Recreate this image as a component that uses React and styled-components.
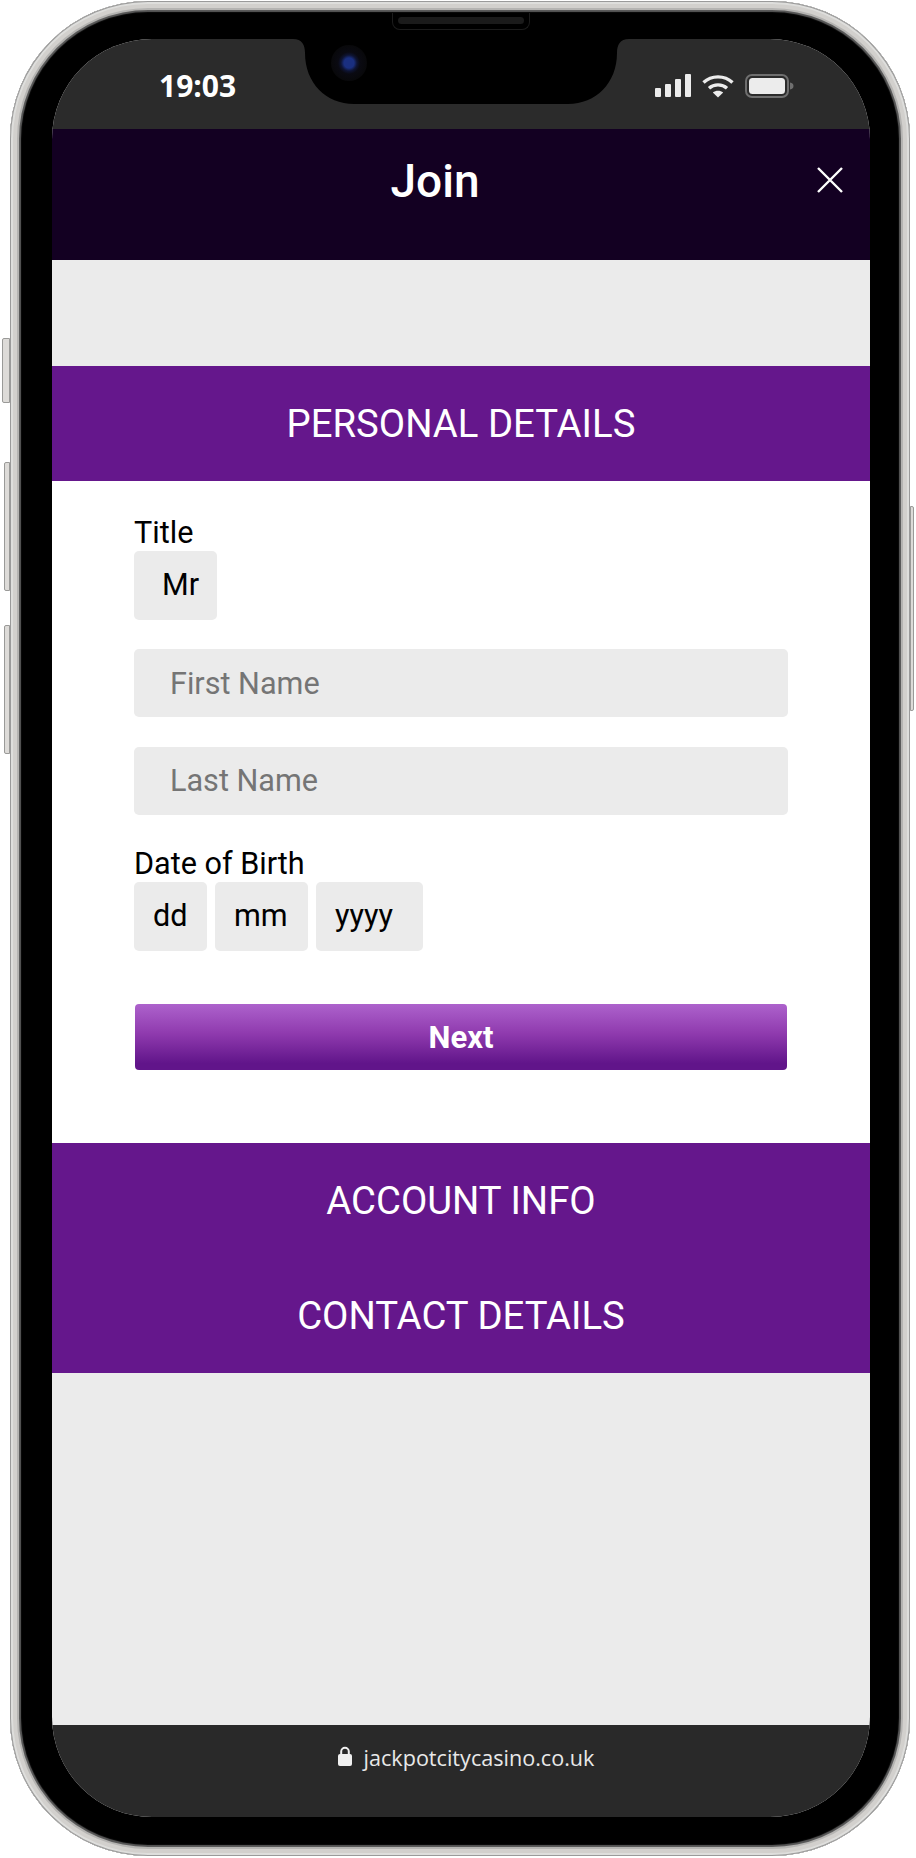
import React from "react";
import styled, { createGlobalStyle } from "styled-components";

const GlobalStyle = createGlobalStyle`
  html, body {
    margin: 0;
    padding: 0;
    background: #fff;
  }
  body {
    font-family: Roboto, "Liberation Sans", sans-serif;
  }
`;

const Page = styled.div`
  width: 916px;
  height: 1858px;
  padding: 1px 6px 2px 10px;
  box-sizing: border-box;
`;

const Phone = styled.div`
  position: relative;
  height: 100%;
  box-sizing: border-box;
  padding: 38px 40px 39px 42px;
  border-radius: 138px;
  background: #000;
  box-shadow:
    inset 0 0 0 1px #9a9a9a,
    inset 0 0 0 3px #dededc,
    inset 0 0 0 7px #d2d0cd,
    inset 0 0 0 9px #b5b4b2,
    inset 0 0 1px 11px #5a5a5a;
`;

const SideButton = styled.div`
  position: absolute;
  top: ${(p) => p.$top}px;
  height: ${(p) => p.$height}px;
  width: ${(p) => p.$width}px;
  ${(p) => (p.$right ? "right: -4px;" : `left: -${p.$width}px;`)}
  box-sizing: border-box;
  background: #dddbd8;
  border: 1px solid #9a9a98;
  border-radius: ${(p) => (p.$right ? "0 2px 2px 0" : "2px 0 0 2px")};
`;

const Speaker = styled.div`
  position: absolute;
  z-index: 2;
  top: 12px;
  left: 382px;
  width: 138px;
  height: 17px;
  box-sizing: border-box;
  padding: 4px 5px;
  border-radius: 0 0 8px 8px;
  border: 1px solid #1c1c1c;
  border-top: 0;
  background: #000;

  &::after {
    content: "";
    display: block;
    height: 7px;
    border-radius: 4px;
    background: #1b1b1b;
  }
`;

const Camera = styled.div`
  position: absolute;
  z-index: 2;
  top: 44px;
  left: 321px;
  width: 36px;
  height: 36px;
  border-radius: 50%;
  background: radial-gradient(circle, #1a2f80 0 5px, #0e1433 8px, #0a0a12 11px, #08080a 18px);
`;

const Screen = styled.div`
  position: relative;
  display: flex;
  flex-direction: column;
  height: 100%;
  overflow: hidden;
  border-radius: 100px;
  background: #ebebeb;
`;

const NotchShape = styled.svg`
  position: absolute;
  top: 0;
  left: 240px;
  display: block;
`;

const StatusBar = styled.div`
  display: flex;
  flex: 0 0 90px;
  align-items: center;
  justify-content: space-between;
  box-sizing: border-box;
  padding: 4px 76px 0 107px;
  background: #2b2b2b;
  color: #fff;
`;

const Clock = styled.span`
  font-family: "Open Sans", sans-serif;
  font-size: 30px;
  font-weight: 700;
  position: relative;
  top: -1px;
`;

const StatusIcons = styled.div`
  display: flex;
  align-items: center;
  gap: 11px;
`;

const Header = styled.header`
  position: relative;
  flex: 0 0 131px;
  display: flex;
  justify-content: center;
  box-sizing: border-box;
  padding: 27px 52px 0 0;
  background: #130022;
  color: #fff;
`;

const HeaderTitle = styled.h1`
  margin: 0;
  font-size: 46px;
  font-weight: 500;
  line-height: 50px;
`;

const CloseButton = styled.svg`
  position: absolute;
  top: 38px;
  right: 27px;
`;

const Spacer = styled.div`
  flex: 0 0 106px;
`;

const SectionBar = styled.div`
  flex: 0 0 115px;
  display: flex;
  align-items: center;
  justify-content: center;
  box-sizing: border-box;
  padding-top: 2px;
  background: #65178c;
  color: #fff;
  font-size: 38.3px;
  line-height: 1;
`;

const Form = styled.form`
  flex: 0 0 662px;
  box-sizing: border-box;
  padding: 35px 82px 0;
  background: #fff;
`;

const Label = styled.div`
  height: 35px;
  font-size: 30.6px;
  line-height: 33px;
  color: #000;
`;

const Box = styled.div`
  display: flex;
  align-items: center;
  box-sizing: border-box;
  height: 68.5px;
  width: ${(p) => (p.$width ? `${p.$width}px` : "auto")};
  padding: 0 0 ${(p) => (p.$placeholder ? 0 : 1)}px ${(p) => p.$pad}px;
  border-radius: 5px;
  background: #ebebeb;
  font-size: 30.6px;
  color: ${(p) => (p.$placeholder ? "#757575" : "#000")};
`;

const FieldRow = styled.div`
  margin-top: 29.3px;
`;

const DobLabel = styled(Label)`
  margin-top: 32px;
`;

const DateRow = styled.div`
  display: flex;
  gap: 8px;
`;

const NextButton = styled.button`
  display: block;
  width: 652px;
  height: 66px;
  margin: 53.6px 0 0 1px;
  padding: 0;
  border: 0;
  border-radius: 4px;
  background: linear-gradient(#ad62cc 0%, #8f3aae 45%, #61158a 90%, #61158a 100%);
  color: #fff;
  font-family: Roboto, sans-serif;
  font-size: 31px;
  font-weight: 700;
`;

const Filler = styled.div`
  flex: 1;
`;

const AddressBar = styled.footer`
  flex: 0 0 92px;
  display: flex;
  justify-content: center;
  gap: 12px;
  box-sizing: border-box;
  padding: 18px 0 0 10px;
  background: #292929;
  color: #e8e8e8;
  font-family: "Open Sans", sans-serif;
  font-size: 21.6px;
  line-height: 30px;
`;

const SignalIcon = () => (
  <svg width="36" height="24" viewBox="0 0 36 24" fill="#ececec">
    <rect x="0" y="14" width="6" height="9" rx="1" />
    <rect x="10" y="10" width="6" height="13" rx="1" />
    <rect x="20" y="5" width="6" height="18" rx="1" />
    <rect x="30" y="0" width="6" height="23" rx="1" />
  </svg>
);

const WifiIcon = () => (
  <svg width="32" height="24" viewBox="0 0 32 24" fill="none" stroke="#ececec" strokeWidth="3.4">
    <path d="M1.5 8.5C9.5 1 22.5 1 30.5 8.5" />
    <path d="M7 14.2C12 9.8 20 9.8 25 14.2" />
    <path d="M16 23.5L10.8 18.6C13.8 16 18.2 16 21.2 18.6Z" fill="#ececec" stroke="none" />
  </svg>
);

const BatteryIcon = () => (
  <svg width="49" height="24" viewBox="0 0 49 24">
    <rect x="1" y="1" width="42" height="22" rx="6" fill="none" stroke="#6f6f6f" strokeWidth="2" />
    <rect x="4" y="4" width="36" height="16" rx="3.5" fill="#ececec" />
    <path d="M45 8.5C47.5 9 48.5 10.3 48.5 12S47.5 15 45 15.5Z" fill="#6f6f6f" />
  </svg>
);

const LockIcon = () => (
  <svg width="14" height="20" viewBox="0 0 14 20" style={{ marginTop: 3 }}>
    <path d="M3.2 9V5.6a3.8 3.8 0 0 1 7.6 0V9" fill="none" stroke="#f0f0f0" strokeWidth="2" />
    <rect x="0" y="8" width="14" height="12" rx="2" fill="#f0f0f0" />
  </svg>
);

const App = () => (
  <Page>
    <GlobalStyle />
    <Phone>
      <SideButton $top={337} $height={65} $width={8} />
      <SideButton $top={461} $height={129} $width={6} />
      <SideButton $top={624} $height={129} $width={6} />
      <SideButton $right $top={505} $height={205} $width={4} />
      <Speaker />
      <Camera />
      <Screen>
        <StatusBar>
          <Clock>19:03</Clock>
          <StatusIcons>
            <SignalIcon />
            <WifiIcon />
            <BatteryIcon />
          </StatusIcons>
        </StatusBar>
        <NotchShape width="338" height="66" viewBox="0 0 338 66">
          <path
            d="M0 0H1C10 0 13 6 13 14C13 44 34 65 62 65H276C304 65 325 44 325 14C325 6 328 0 337 0H338Z"
            fill="#000"
          />
        </NotchShape>
        <Header>
          <HeaderTitle>Join</HeaderTitle>
          <CloseButton width="26" height="26" viewBox="0 0 26 26" stroke="#fff" strokeWidth="2.4">
            <path d="M1 1L25 25M25 1L1 25" />
          </CloseButton>
        </Header>
        <Spacer />
        <SectionBar>PERSONAL DETAILS</SectionBar>
        <Form>
          <Label>Title</Label>
          <Box $width={83} $pad={28}>Mr</Box>
          <FieldRow>
            <Box $pad={36} $placeholder>First Name</Box>
          </FieldRow>
          <FieldRow>
            <Box $pad={36} $placeholder>Last Name</Box>
          </FieldRow>
          <DobLabel>Date of Birth</DobLabel>
          <DateRow>
            <Box $width={73} $pad={19}>dd</Box>
            <Box $width={93} $pad={19}>mm</Box>
            <Box $width={107} $pad={19}>yyyy</Box>
          </DateRow>
          <NextButton type="button">Next</NextButton>
        </Form>
        <SectionBar>ACCOUNT INFO</SectionBar>
        <SectionBar>CONTACT DETAILS</SectionBar>
        <Filler />
        <AddressBar>
          <LockIcon />
          <span>jackpotcitycasino.co.uk</span>
        </AddressBar>
      </Screen>
    </Phone>
  </Page>
);

export default App;
